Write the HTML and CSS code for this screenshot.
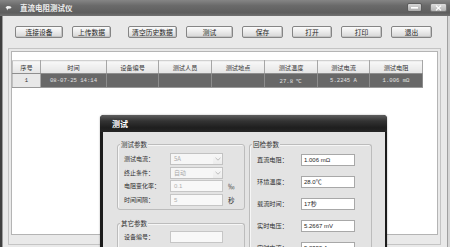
FILE: index.html
```html
<!DOCTYPE html>
<html>
<head>
<meta charset="utf-8">
<title>直流电阻测试仪</title>
<link rel="stylesheet" href="styles.css">
</head>
<body>
<div class="window">
  <div class="titlebar">
    <svg class="app-icon" viewBox="0 0 7 6" width="7" height="6"><path d="M0.5 2.2 L2.5 1 L5.2 1.2 L6.6 2.4 L5.4 3.6 L3 3.8 L2.2 5.4 L1.6 3.4 Z" fill="#f2f2f2"/></svg>
    <span class="title">直流电阻测试仪</span>
    <div class="wctrls">
      <span class="wbtn min"><svg width="7" height="3" viewBox="0 0 7 3"><rect x="0" y="1" width="7" height="1.6" fill="#fff"/></svg></span>
      <span class="wbtn close"><svg width="7" height="6" viewBox="0 0 7 6"><path d="M1 0.6 L6 5.4 M6 0.6 L1 5.4" stroke="#fff" stroke-width="1.3"/></svg></span>
    </div>
  </div>
  <div class="frame">
    <div class="edge-left"></div>
    <div class="client">
      <div class="toolbar">
        <button class="btn w48">连接设备</button>
        <button class="btn w39">上传数据</button>
        <button class="btn w49 sep">清空历史数据</button>
        <button class="btn w47">测试</button>
        <button class="btn w41">保存</button>
        <button class="btn w40">打开</button>
        <button class="btn w41">打印</button>
        <button class="btn w41">退出</button>
      </div>
      <div class="panel">
        <div class="list">
          <table class="grid">
            <colgroup>
              <col class="c28"><col class="c66"><col class="c52"><col class="c53"><col class="c53"><col class="c53"><col class="c52"><col class="c53">
            </colgroup>
            <thead>
              <tr><th>序号</th><th>时间</th><th>设备编号</th><th>测试人员</th><th>测试地点</th><th>测试温度</th><th>测试电流</th><th>测试电阻</th></tr>
            </thead>
            <tbody>
              <tr><td class="idx">1</td><td>08-07-25 14:14</td><td></td><td></td><td></td><td>27.8 ℃</td><td>5.2245 A</td><td>1.006 mΩ</td></tr>
            </tbody>
          </table>
        </div>
      </div>
    </div>
    <div class="edge-right"></div>
  </div>

  <div class="dialog">
    <div class="dlg-title">测试</div>
    <div class="dlg-body">
      <div class="col-left">
        <div class="group g1">
          <span class="legend">测试参数</span>
          <div class="form-left">
            <span class="lbl">测试电流：</span>
            <div class="combo"><span class="val">5A</span><span class="arrow"><svg width="6" height="4" viewBox="0 0 6 4"><path d="M0.5 0.8 L3 3.2 L5.5 0.8" fill="none" stroke="#b8b8b8" stroke-width="0.9"/></svg></span></div>
            <span></span>
            <span class="lbl">终止条件：</span>
            <div class="combo"><span class="val">自动</span><span class="arrow"><svg width="6" height="4" viewBox="0 0 6 4"><path d="M0.5 0.8 L3 3.2 L5.5 0.8" fill="none" stroke="#b8b8b8" stroke-width="0.9"/></svg></span></div>
            <span></span>
            <span class="lbl">电阻变化率：</span>
            <div class="field dis">0.1</div>
            <span class="unit">‰</span>
            <span class="lbl">时间间隔：</span>
            <div class="field dis">5</div>
            <span class="unit">秒</span>
          </div>
        </div>
        <div class="group g2">
          <span class="legend">其它参数</span>
          <div class="form-left">
            <span class="lbl">设备编号：</span>
            <div class="field dis"></div>
            <span></span>
          </div>
        </div>
      </div>
      <div class="group g3">
        <span class="legend">回检参数</span>
        <div class="form-right">
          <span class="lbl r">直流电阻：</span><div class="field">1.006 mΩ</div>
          <span class="lbl r">环境温度：</span><div class="field">28.0℃</div>
          <span class="lbl r">载流时间：</span><div class="field">17秒</div>
          <span class="lbl r">实时电压：</span><div class="field">5.2667 mV</div>
          <span class="lbl r">实时电流：</span><div class="field">5.2359 A</div>
        </div>
      </div>
    </div>
  </div>
</div>
</body>
</html>
```

FILE: styles.css
```css
* { box-sizing: border-box; margin: 0; padding: 0; }
html, body { width: 450px; height: 247px; overflow: hidden; }
body {
  font-family: "Noto Sans CJK SC", "Noto Sans", sans-serif;
  background: #e8e8e8;
  color: #333;
}
.window {
  position: relative;
  width: 450px;
  height: 247px;
  background: #e9e9e9;
  overflow: hidden;
}

/* title bar */
.titlebar {
  height: 16px;
  display: flex;
  align-items: center;
  padding-left: 5px;
  background: linear-gradient(#858585, #6a6a6a 35%, #5e5e5e 80%, #727272);
}
.app-icon { display: block; margin-right: 8px; }
.title {
  color: #eeeeee;
  font-size: 7.5px;
  font-weight: bold;
  line-height: 16px;
}
.wctrls {
  margin-left: auto;
  margin-right: 3px;
  align-self: flex-start;
  margin-top: 3px;
  display: flex;
  gap: 8px;
}
.wbtn {
  height: 9px;
  border: 1px solid #5c5c5c;
  border-radius: 2px;
  background: linear-gradient(#d6d6d6, #aaaaaa);
  display: flex;
  align-items: center;
  justify-content: center;
}
.wbtn svg { display: block; }
.wbtn.min { width: 15px; }
.wbtn.close { width: 17px; background: linear-gradient(#dddddd, #b4b4b4); border-color: #777; }

/* frame */
.frame { display: flex; height: 231px; }
.edge-left {
  width: 3px;
  background: linear-gradient(to right, #404040 0, #404040 2px, #9c9c9c 2px);
}
.edge-right {
  width: 3px;
  background: linear-gradient(to right, #a0a0a0 0, #a0a0a0 1px, #d6d6d6 1px);
}
.client { flex: 1; padding: 10px 0 0 5px; }

/* toolbar */
.toolbar {
  display: flex;
  gap: 9px;
  padding-left: 7px;
  height: 12px;
}
.btn {
  height: 12px;
  border: 1px solid #858585;
  border-radius: 2px;
  background: linear-gradient(#fbfbfb, #ececec 45%, #d6d6d6);
  box-shadow: inset -1px -1px 0 #c4c4c4;
  font-family: "Noto Sans CJK SC", sans-serif;
  font-size: 6.8px;
  line-height: 10px;
  color: #262626;
  text-align: center;
}
.btn.sep { margin-left: 8px; }
.w39 { width: 39px; }
.w40 { width: 40px; }
.w41 { width: 41px; }
.w47 { width: 47px; }
.w48 { width: 48px; }
.w49 { width: 49px; }

/* panel + list */
.panel {
  margin-top: 10px;
  width: 433px;
  height: 197px;
  border: 1px solid #c4c4c4;
  padding: 2px 2px 9px 2px;
}
.list {
  height: 100%;
  background: #ffffff;
  border: 1px solid #b4b4b4;
  padding-top: 8px;
}
.grid {
  border-collapse: collapse;
  table-layout: fixed;
  width: 410px;
}
.c28 { width: 28px; }
.c66 { width: 66px; }
.c52 { width: 52px; }
.c53 { width: 53px; }
.grid th {
  height: 13px;
  padding: 0;
  font-size: 6.2px;
  font-weight: normal;
  color: #333;
  background: linear-gradient(#f8f8f8, #e4e4e4);
  border-right: 1px solid #a6a6a6;
  border-bottom: 1px solid #8e8e8e;
  border-top: 1px solid #d0d0d0;
}
.grid th:first-child { border-left: 1px solid #c0c0c0; }
.grid td {
  height: 14px;
  padding: 0;
  background: #686868;
  color: #e2e2e2;
  border-right: 1px solid #8c8c8c;
  border-bottom: 1px solid #9a9a9a;
  font-family: "Liberation Mono", monospace;
  font-size: 5.6px;
  text-align: center;
}
.grid td.idx {
  background: #e8e8e8;
  color: #333;
  border-left: 1px solid #c0c0c0;
  border-right: 1px solid #a6a6a6;
}

/* dialog */
.dialog {
  position: absolute;
  left: 100px;
  top: 115px;
  width: 287px;
  height: 145px;
  background: #1c1c1c;
  border-radius: 4px 4px 0 0;
  box-shadow: 0 0 2px rgba(0,0,0,0.35);
}
.dlg-title {
  height: 17px;
  padding-left: 12px;
  line-height: 17px;
  font-size: 8px;
  font-weight: bold;
  color: #ffffff;
  border-radius: 4px 4px 0 0;
  background: linear-gradient(#5e5e5e, #333 35%, #1e1e1e 75%, #262626);
}
.dlg-body {
  margin: 0 2px 0 3px;
  height: 128px;
  background: #e3e3e3;
  padding: 12px 0 0 14px;
  display: flex;
  gap: 4px;
}
.col-left {
  width: 128px;
  display: flex;
  flex-direction: column;
  gap: 13px;
}
.group {
  position: relative;
  border: 1px solid #bcbcbc;
  border-radius: 3px;
  box-shadow: inset 1px 1px 0 #f6f6f6;
}
.legend {
  position: absolute;
  top: -5px;
  left: 2px;
  padding: 0 1px;
  background: #e3e3e3;
  font-size: 6.5px;
  line-height: 9px;
  color: #333;
}
.g1 { height: 66px; padding: 8px 0 0 6px; }
.g2 { flex: 1; padding: 7px 0 0 6px; border-bottom: none; }
.g3 { width: 123px; padding: 9px 0 0 7px; border-bottom: none; }

.form-left {
  display: grid;
  grid-template-columns: 46px 53px 12px;
  grid-auto-rows: 12px;
  row-gap: 1.5px;
  align-items: center;
}
.form-right {
  display: grid;
  grid-template-columns: 44px 54px;
  grid-auto-rows: 12px;
  row-gap: 10px;
  align-items: center;
}
.lbl {
  font-size: 6px;
  line-height: 12px;
  color: #2e2e2e;
  white-space: nowrap;
}
.lbl.r { font-size: 6.2px; }
.unit {
  font-size: 6.5px;
  line-height: 12px;
  padding-left: 5px;
  color: #333;
}
.combo {
  height: 12px;
  display: flex;
  border: 1px solid #c2c2c2;
  background: #f6f6f6;
}
.combo .val {
  flex: 1;
  padding-left: 3px;
  font-size: 6px;
  line-height: 10px;
  color: #ababab;
  font-family: "Noto Sans CJK SC", "Liberation Sans", sans-serif;
}
.combo .arrow {
  width: 9px;
  display: flex;
  align-items: center;
  justify-content: center;
  background: linear-gradient(#f8f8f8, #ececec);
}
.combo .arrow svg { display: block; }
.field {
  height: 12px;
  border: 1px solid #a8a8a8;
  background: #ffffff;
  padding-left: 2px;
  font-family: "Liberation Sans", "Noto Sans CJK SC", sans-serif;
  font-size: 6px;
  line-height: 10px;
  color: #262626;
  white-space: nowrap;
}
.field.dis {
  border-color: #c6c6c6;
  background: #f8f8f8;
  color: #b0b0b0;
  padding-left: 3px;
}
```
